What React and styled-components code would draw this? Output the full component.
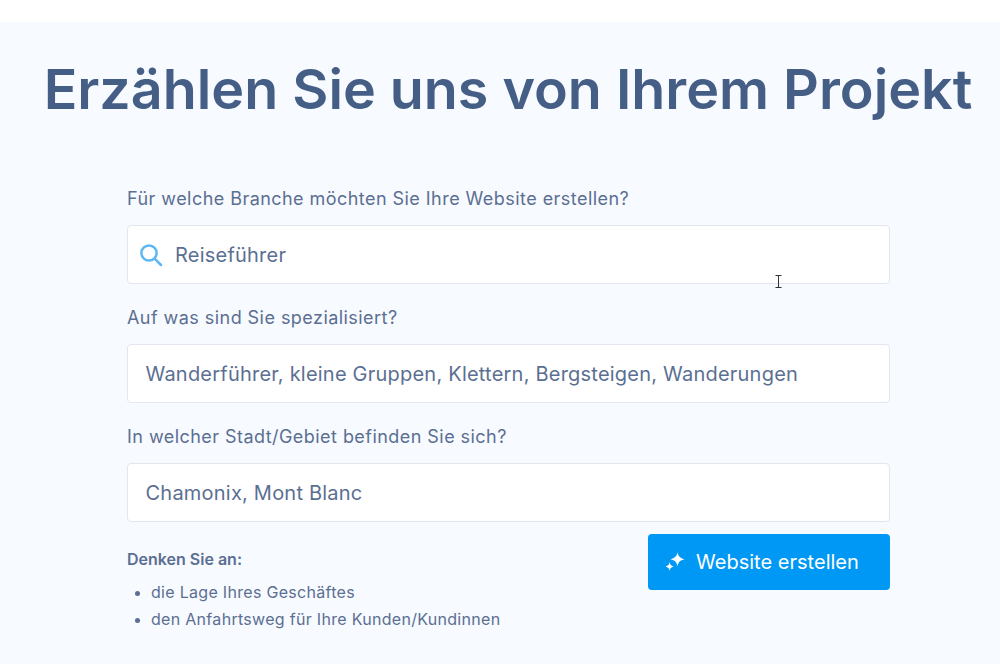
import React from 'react';
import styled, { createGlobalStyle } from 'styled-components';

const GlobalStyle = createGlobalStyle`
  html, body {
    margin: 0;
    padding: 0;
    background: #fff;
  }
  body {
    font-family: Inter, "Liberation Sans", sans-serif;
    overflow: hidden;
  }
`;

const Page = styled.div`
  position: relative;
  height: 664px;
  padding-top: 22px;
  box-sizing: border-box;
  overflow: hidden;
`;

const Section = styled.section`
  height: 642px;
  background: #f7faff;
  box-sizing: border-box;
  padding-top: 32px;
`;

const Title = styled.h1`
  margin: 0 0 63px 16px;
  font-size: 55.6px;
  line-height: 70px;
  font-weight: 600;
  color: #455e86;
  text-align: center;
  white-space: nowrap;
`;

const Form = styled.div`
  width: 763px;
  margin-left: 127px;
`;

const Label = styled.div`
  font-size: 18px;
  line-height: 24px;
  letter-spacing: 0.45px;
  color: #5b6f92;
  margin-bottom: 14px;
`;

const Field = styled.div`
  display: flex;
  align-items: center;
  gap: 12px;
  height: 59px;
  box-sizing: border-box;
  padding: 1px 18px 0 ${(p) => (p.$icon ? '11px' : '17.5px')};
  margin-bottom: 22px;
  background: #fff;
  border: 1px solid #e3e6ee;
  border-radius: 4px;
  font-size: 20px;
  letter-spacing: 0.22px;
  color: #5b6f92;
`;

const Bottom = styled.div`
  display: flex;
  justify-content: space-between;
  align-items: flex-start;
  margin-top: -10px;
`;

const Hints = styled.div`
  padding-top: 14px;
  color: #5b6f92;
`;

const HintTitle = styled.div`
  font-size: 16px;
  line-height: 22px;
  font-weight: 600;
  margin-bottom: 9px;
`;

const HintList = styled.ul`
  margin: 0;
  padding: 0 0 0 24px;
  font-size: 16px;
  line-height: 27px;
  letter-spacing: 0.3px;

  li::marker {
    font-size: 14px;
  }
`;

const Button = styled.button`
  display: flex;
  align-items: center;
  gap: 11px;
  width: 242px;
  height: 56px;
  padding: 0 0 0 17px;
  border: none;
  border-radius: 4px;
  background: #0098f5;
  color: #fff;
  font-family: inherit;
  font-size: 20px;
  letter-spacing: 0.02px;
  cursor: pointer;
`;

const Cursor = styled.svg`
  position: absolute;
  left: 775px;
  top: 275px;
`;

function SearchIcon() {
  return (
    <svg width="24" height="24" viewBox="0 0 24 24" fill="none" stroke="#5cb8f3" strokeWidth="2.5" strokeLinecap="round">
      <circle cx="10" cy="10" r="7.6" />
      <path d="M15.6 15.6 L22 22" />
    </svg>
  );
}

function SparkIcon() {
  return (
    <svg width="20" height="20" viewBox="0 0 20 20" fill="#fff">
      <path d="M12.5 0.5 C13.4 4.4 15 6 19.5 7.2 C15 8.4 13.4 10 12.5 14 C11.6 10 10 8.4 5.5 7.2 C10 6 11.6 4.4 12.5 0.5 Z" />
      <path d="M4.6 10 C5 12.6 6 13.7 8.6 14.5 C6 15.3 5 16.4 4.6 19 C4.2 16.4 3.2 15.3 0.6 14.5 C3.2 13.7 4.2 12.6 4.6 10 Z" />
    </svg>
  );
}

export default function App() {
  return (
    <>
      <GlobalStyle />
      <Page>
        <Section>
          <Title>Erzählen Sie uns von Ihrem Projekt</Title>
          <Form>
            <Label>Für welche Branche möchten Sie Ihre Website erstellen?</Label>
            <Field $icon>
              <SearchIcon />
              <span>Reiseführer</span>
            </Field>
            <Label>Auf was sind Sie spezialisiert?</Label>
            <Field>Wanderführer, kleine Gruppen, Klettern, Bergsteigen, Wanderungen</Field>
            <Label>In welcher Stadt/Gebiet befinden Sie sich?</Label>
            <Field>Chamonix, Mont Blanc</Field>
            <Bottom>
              <Hints>
                <HintTitle>Denken Sie an:</HintTitle>
                <HintList>
                  <li>die Lage Ihres Geschäftes</li>
                  <li>den Anfahrtsweg für Ihre Kunden/Kundinnen</li>
                </HintList>
              </Hints>
              <Button>
                <SparkIcon />
                Website erstellen
              </Button>
            </Bottom>
          </Form>
        </Section>
        <Cursor width="7" height="13" viewBox="0 0 7 13" fill="none" stroke="#333" strokeWidth="1">
          <path d="M0.5 0.5 H6.5 M3.5 0.5 V12.5 M0.5 12.5 H6.5" />
        </Cursor>
      </Page>
    </>
  );
}
